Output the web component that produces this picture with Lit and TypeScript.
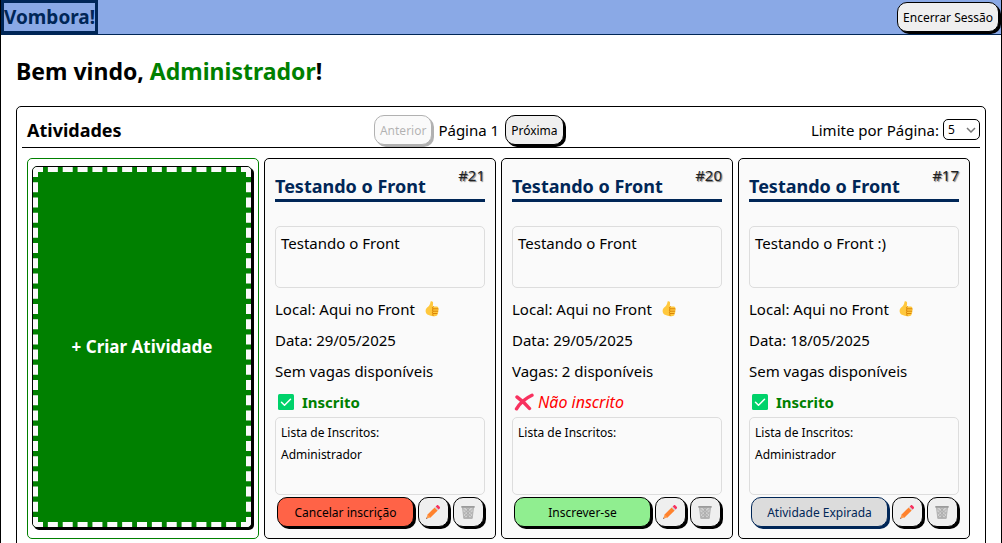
import { LitElement, html, css, svg, nothing } from "lit";
import { customElement, property, state } from "lit/decorators.js";

interface Activity {
  id: number;
  title: string;
  description: string;
  place: string;
  date: string;
  seats: number;
  enrolled: boolean;
  expired: boolean;
  people: string[];
}

const ACTIVITIES: Activity[] = [
  { id: 21, title: "Testando o Front", description: "Testando o Front", place: "Aqui no Front", date: "29/05/2025", seats: 0, enrolled: true, expired: false, people: ["Administrador"] },
  { id: 20, title: "Testando o Front", description: "Testando o Front", place: "Aqui no Front", date: "29/05/2025", seats: 2, enrolled: false, expired: false, people: [] },
  { id: 17, title: "Testando o Front", description: "Testando o Front :)", place: "Aqui no Front", date: "18/05/2025", seats: 0, enrolled: true, expired: true, people: ["Administrador"] },
];

const thumb = html`<svg class="icon" width="16" height="18" viewBox="0 0 16 18" aria-hidden="true">${svg`
  <path d="M6.6 1.4c1.4-.7 2.6.2 2.5 1.8L8.8 6.4h4c1.3 0 1.900 1.300 1.200 2.200.9.7.8 1.900 0 2.500.6.8.3 1.900-.5 2.300.4 1.200-.4 2.300-1.700 2.500-2.600.5-5.300.3-7.200-.8C2.600 14.200 1.600 12.800 1.600 10.900c0-2 1.100-3.200 2.500-4.200C5.600 5.500 6.200 3.800 6.600 1.400z" fill="#ffc83d"/>
  <path d="M9.300 8.800h4.800M9.200 11.200h4.600M9 13.500h4.100M9.400 6.600c-1.200.5-1.300 1.900-.2 2.300-1.100.5-1.100 1.900 0 2.300-1 .5-1 1.800 0 2.300-.7.7-.6 1.600.1 2.300" fill="none" stroke="#d67d00" stroke-width=".9" stroke-linecap="round"/>`}</svg>`;

const check = html`<svg class="icon" width="22" height="18" viewBox="0 0 22 18" aria-hidden="true">${svg`
  <rect x="3" y="1" width="16" height="16" rx="1.5" fill="#00d26a"/>
  <path d="M6.5 9.2l3 3 6-6" fill="none" stroke="#fff" stroke-width="1.5" stroke-linecap="round" stroke-linejoin="round"/>`}</svg>`;

const cross = html`<svg class="icon" width="22" height="18" viewBox="0 0 22 18" aria-hidden="true">${svg`
  <path d="M5 4C8.5 6.5 13.5 10.5 17.5 15.5M20 2.2C13.5 5.2 8 10 4.5 15.8" fill="none" stroke="#f8315f" stroke-width="3.4" stroke-linecap="round"/>`}</svg>`;

const pencil = html`<svg width="16" height="16" viewBox="0 0 16 16" aria-hidden="true">${svg`
  <path d="M1.2 14.8l1.3-4L5.3 13.5z" fill="#ff9a4a"/>
  <path d="M1.2 14.8l.4-1.200.8.8z" fill="#402a32"/>
  <path d="M2.3 10.7L9.7 3.4l3 3-7.400 7.300z" fill="#ff822d"/>
  <path d="M9.700 3.400l1.200-1.200 3 3-1.200 1.200z" fill="#d3d3d3"/>
  <path d="M10.700 2.400l1-1c.5-.5 1.200-.5 1.700 0l1.300 1.300c.5.5.5 1.200 0 1.700l-1 1z" fill="#f8315f"/>`}</svg>`;

const bin = html`<svg width="16" height="16" viewBox="0 0 16 16" aria-hidden="true">${svg`
  <path d="M2.4 3h11.200l-1.400 11.300H3.800z" fill="#d0d0d0"/>
  <path d="M3 4.500l9 8.500M5.500 3.500l7 6.500M3.400 8l6 6M13 4.500L4 13M10.500 3.500l-7 6.500M12.600 8l-6 6M8 3.500v10.500" stroke="#a4a4a4" stroke-width=".7" fill="none"/>
  <path d="M2.400 3h11.200l-1.400 11.300H3.800z" fill="none" stroke="#a8a8a8" stroke-width=".8"/>
  <path d="M1.300 2h13.400v1.700H1.300z" fill="#9b9b9b"/>
  <path d="M3.700 13.300h8.600v1.300H3.700z" fill="#adadad"/>`}</svg>`;

const controls = css`
  * {
    box-sizing: border-box;
  }
  button {
    font: inherit;
    font-size: 12px;
    line-height: 18px;
    color: #000;
    background: #efefef;
    border: 1px solid #000;
    border-radius: 10px;
    box-shadow: 2px 2px 0 #000;
    padding: 6px 5px 4px;
    white-space: nowrap;
    cursor: pointer;
  }
  button:disabled {
    cursor: default;
  }
`;

@customElement("activity-card")
class ActivityCard extends LitElement {
  @property({ attribute: false }) activity!: Activity;

  static styles = [
    controls,
    css`
      :host {
        display: flex;
        flex-direction: column;
        box-sizing: border-box;
        padding: 8px 10px 11px;
        border: 1px solid #000;
        border-radius: 5px;
        background: #fafafa;
      }
      .id {
        align-self: flex-end;
        line-height: 16px;
        height: 8px;
        font-size: 15px;
        color: #222;
        text-shadow: 1px 1px 1px #777;
      }
      .title {
        margin: 0 0 24px;
        padding-bottom: 2px;
        font-size: 18px;
        line-height: 22px;
        color: #002657;
        border-bottom: 3px solid #002657;
      }
      .box {
        border: 1px solid #ddd;
        border-radius: 5px;
        padding: 4px 5px;
      }
      .description {
        height: 62px;
        line-height: 24px;
        margin-bottom: 5px;
      }
      .line {
        display: flex;
        align-items: center;
        margin: 0;
        height: 31px;
        white-space: nowrap;
      }
      .place {
        gap: 9px;
      }
      .status {
        gap: 5px;
      }
      .in {
        color: green;
        font-weight: bold;
      }
      .out {
        gap: 4px;
        color: red;
        font-size: 16px;
        font-style: italic;
      }
      .people {
        height: 78px;
        font-size: 12px;
        line-height: 22px;
      }
      .people p {
        margin: 0;
      }
      .people ul {
        margin: 0;
        padding: 0;
        list-style: none;
      }
      .actions {
        display: flex;
        gap: 4px;
        padding: 2px 1px 0 2px;
      }
      .main {
        flex: 1;
      }
      .cancel {
        background: tomato;
      }
      .join {
        background: lightgreen;
      }
      .expired {
        background: #dcdcdc;
        color: #002657;
        border-color: #002657;
        box-shadow: 2px 2px 0 #002657;
      }
      .tool {
        display: grid;
        place-items: center;
        width: 31px;
        padding: 0 1px 0 0;
      }
    `,
  ];

  private mainButton(a: Activity) {
    if (a.expired) return html`<button class="main expired" disabled>Atividade Expirada</button>`;
    return a.enrolled
      ? html`<button class="main cancel">Cancelar inscrição</button>`
      : html`<button class="main join">Inscrever-se</button>`;
  }

  render() {
    const a = this.activity;
    return html`
      <span class="id">#${a.id}</span>
      <h3 class="title">${a.title}</h3>
      <div class="box description">${a.description}</div>
      <p class="line place">Local: ${a.place} ${thumb}</p>
      <p class="line">Data: ${a.date}</p>
      <p class="line">${a.seats ? `Vagas: ${a.seats} disponíveis` : "Sem vagas disponíveis"}</p>
      ${a.enrolled
        ? html`<p class="line status in">${check}<span>Inscrito</span></p>`
        : html`<p class="line status out">${cross}<span>Não inscrito</span></p>`}
      <div class="box people">
        <p>Lista de Inscritos:</p>
        ${a.people.length ? html`<ul>${a.people.map((p) => html`<li>${p}</li>`)}</ul>` : nothing}
      </div>
      <div class="actions">
        ${this.mainButton(a)}
        <button class="tool" aria-label="Editar">${pencil}</button>
        <button class="tool" aria-label="Excluir">${bin}</button>
      </div>
    `;
  }
}

@customElement("app-root")
class AppRoot extends LitElement {
  @state() private page = 1;

  static styles = [
    controls,
    css`
      :host {
        display: block;
        box-sizing: border-box;
        height: 100vh;
        overflow: hidden;
        border: solid #000;
        border-width: 0 1px;
        background: #fff;
        color: #000;
        font-family: "Noto Sans", "Open Sans", sans-serif;
        font-size: 15px;
        line-height: 20px;
      }
      .topbar {
        display: flex;
        justify-content: space-between;
        align-items: center;
        background: #8aa9e6;
        border-bottom: 1px solid #002657;
        padding-right: 2px;
      }
      .logo {
        border: 3px solid #002657;
        color: #002657;
        font-size: 19px;
        font-weight: bold;
        line-height: 28px;
        text-decoration: none;
      }
      .content {
        padding: 20px 15px;
      }
      .welcome {
        margin: 0 0 19px;
        font-size: 23px;
        line-height: 32px;
      }
      .name {
        color: green;
      }
      .panel {
        border: 1px solid #000;
        border-radius: 5px;
        padding: 5px;
      }
      .toolbar {
        display: flex;
        justify-content: space-between;
        align-items: center;
        height: 36px;
        border-bottom: 1px solid #000;
      }
      .heading {
        margin: 0;
        padding: 0 5px;
        font-size: 18px;
      }
      .pager {
        display: flex;
        align-items: center;
        gap: 6px;
      }
      .pager button:disabled {
        opacity: 0.3;
      }
      .limit {
        display: flex;
        align-items: center;
        gap: 4px;
      }
      .picker {
        display: grid;
        align-items: center;
      }
      .picker > * {
        grid-area: 1 / 1;
      }
      .picker select {
        appearance: none;
        width: 37px;
        height: 21px;
        padding: 0 4px;
        font: inherit;
        font-size: 12px;
        color: #000;
        background: #fff;
        border: 1px solid #000;
        border-radius: 5px;
      }
      .picker svg {
        justify-self: end;
        margin-right: 4px;
        pointer-events: none;
      }
      .cards {
        display: grid;
        grid-template-columns: repeat(auto-fill, 232px);
        gap: 5px;
        padding: 10px 5px;
      }
      .new {
        display: flex;
        border: 1px solid green;
        border-radius: 5px;
        padding: 7px 6px 10px 4px;
      }
      .create {
        flex: 1;
        display: flex;
        padding: 0;
        border-radius: 5px;
        background: green;
        color: #fff;
        font-size: 17px;
        font-weight: bold;
        overflow: hidden;
      }
      .dashes {
        flex: 1;
        align-self: stretch;
        display: grid;
        place-items: center;
        border: 5px dashed #fafafa;
        border-radius: 4px;
      }
    `,
  ];

  render() {
    return html`
      <header class="topbar">
        <a class="logo" href="#">Vombora!</a>
        <button>Encerrar Sessão</button>
      </header>
      <main class="content">
        <h1 class="welcome">Bem vindo, <span class="name">Administrador</span>!</h1>
        <section class="panel">
          <div class="toolbar">
            <h2 class="heading">Atividades</h2>
            <div class="pager">
              <button ?disabled=${this.page === 1} @click=${() => this.page--}>Anterior</button>
              <span>Página ${this.page}</span>
              <button @click=${() => this.page++}>Próxima</button>
            </div>
            <div class="limit">
              <label for="limit">Limite por Página:</label>
              <span class="picker">
                <select id="limit">
                  <option>5</option>
                  <option>10</option>
                  <option>20</option>
                </select>
                <svg width="10" height="6" viewBox="0 0 10 6" aria-hidden="true">
                  <path d="M1 1l4 4 4-4" fill="none" stroke="#777" stroke-width="1.5" />
                </svg>
              </span>
            </div>
          </div>
          <div class="cards">
            <div class="new">
              <button class="create"><span class="dashes">+ Criar Atividade</span></button>
            </div>
            ${ACTIVITIES.map((a) => html`<activity-card .activity=${a}></activity-card>`)}
          </div>
        </section>
      </main>
    `;
  }
}
